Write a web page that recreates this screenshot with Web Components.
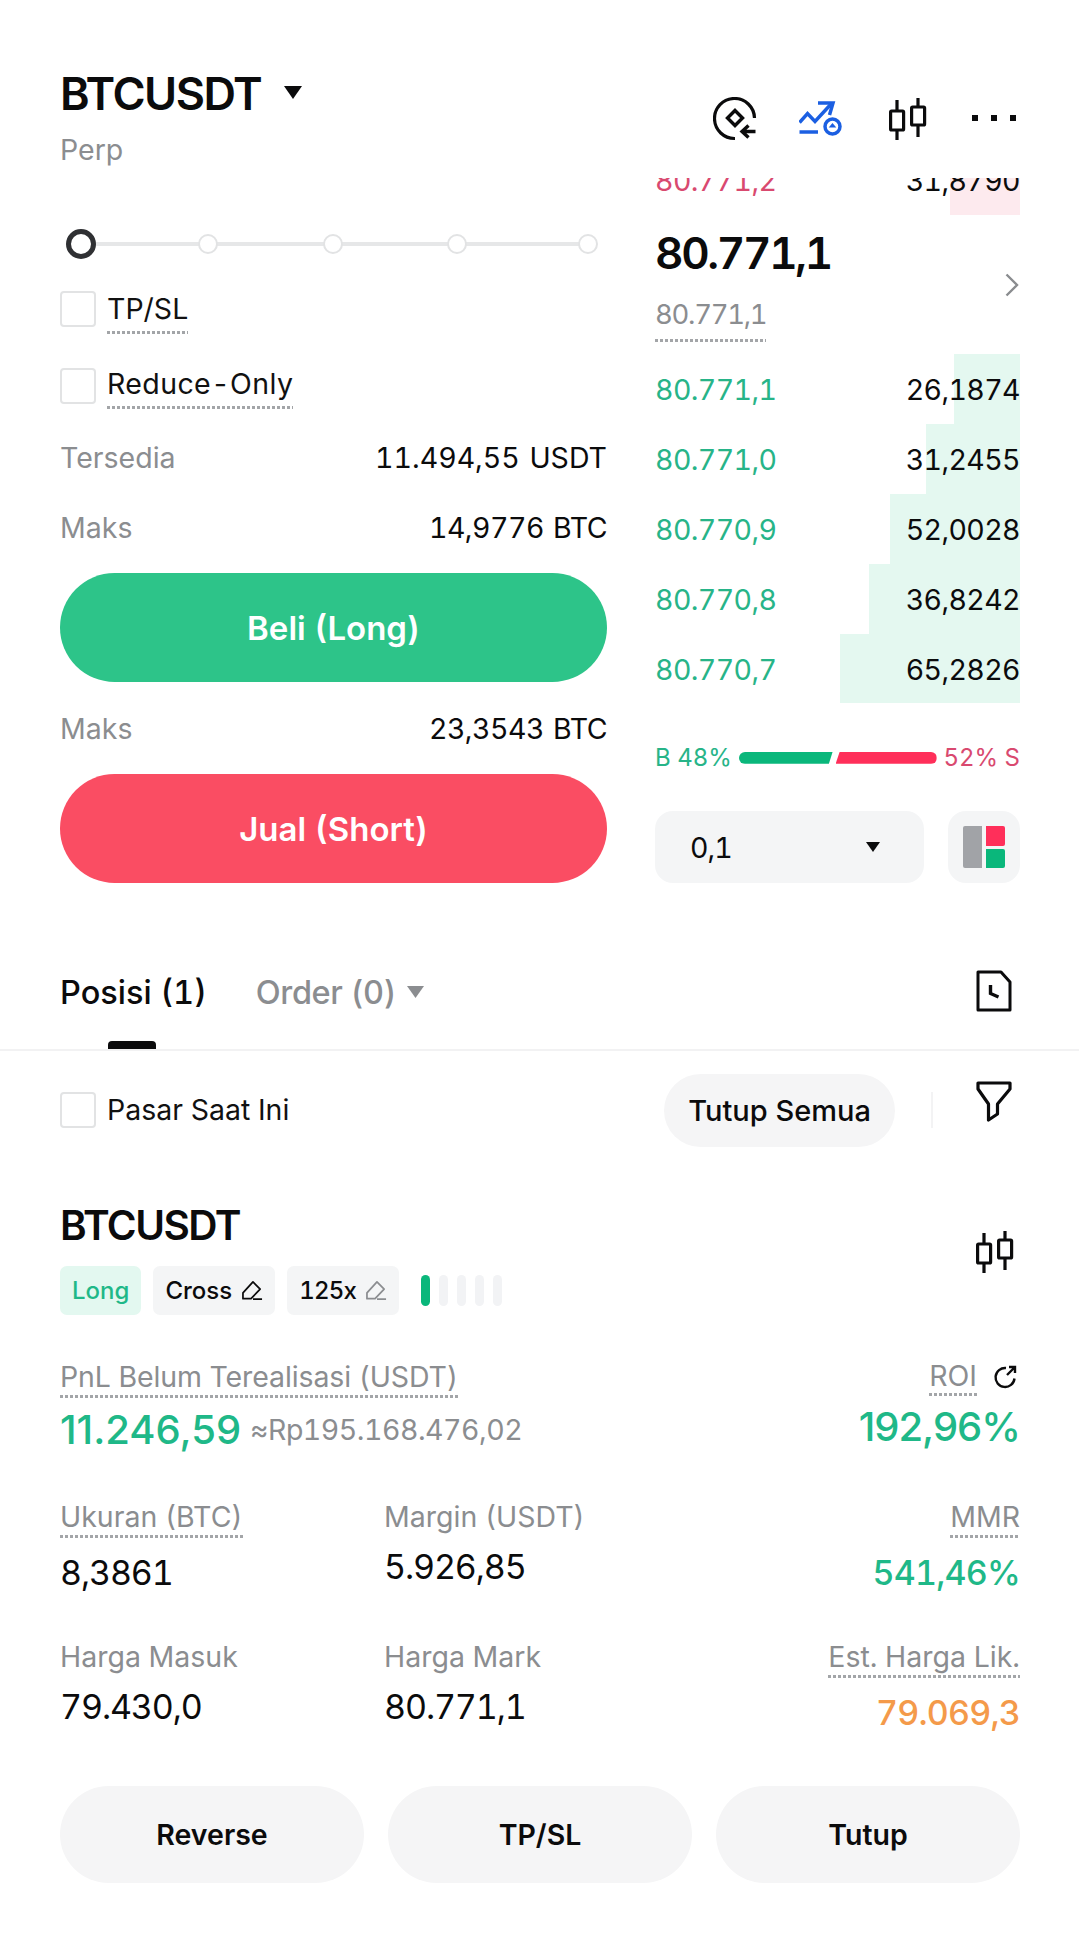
<!DOCTYPE html>
<html lang="id"><head><meta charset="utf-8"><title>BTCUSDT</title>
<style>
html,body{margin:0;background:#fff}
body{font-family:Inter,"Noto Sans",sans-serif;font-variant-numeric:tabular-nums;color:#0b0b0c;width:1079px;height:1934px;overflow:hidden}
</style></head><body>
<trade-screen></trade-screen>
<script>
const DOT='background-image:repeating-linear-gradient(90deg,#a3a5a8 0 3px,transparent 3px 5px);background-size:100% 3px;background-repeat:no-repeat;background-position:0 100%;padding-bottom:3px;';
function def(name,css,render){customElements.define(name,class extends HTMLElement{connectedCallback(){if(this.shadowRoot)return;const s=this.attachShadow({mode:'open'});s.innerHTML='<style>'+css+'</style>'+render(this)}})}
const ICONS={
 copy:'<svg width="44" height="44" viewBox="0 0 44 44" fill="none" stroke="#0b0b0c" stroke-width="3.2"><path d="M41.5 21A20 20 0 1 0 22 41.5"/><path d="M22 13.500l7.500 7.500-7.500 7.500-7.500-7.500z" stroke-width="3.400"/><path d="M42.500 34.500H29M35.500 28.500 29 34.500l6.500 6" stroke-width="3.400"/></svg>',
 alert:'<svg width="44" height="44" viewBox="0 0 44 44" fill="none" stroke="#1b5fe2" stroke-width="3.500"><path d="M.5 25.500 8.500 16.500l7.500 8L33 6"/><path d="M19 6h15l-3.500 12"/><path d="M.5 35h18.500"/><circle cx="33.500" cy="29.500" r="7.500"/><path d="M33.500 26l3.800 4.500h-7.600z" fill="#1b5fe2" stroke="none"/></svg>',
 candle:'<svg width="38" height="42" viewBox="0 0 38 42" fill="none" stroke="#0b0b0c" stroke-width="3.2"><rect x="1.6" y="13" width="13" height="19" rx="1"/><path d="M8 2v11M8 32v10"/><rect x="22.6" y="9" width="13" height="18" rx="1"/><path d="M29 0v9M29 27v12"/></svg>',
 more:'<svg width="44" height="8" viewBox="0 0 44 8" fill="#0b0b0c"><rect x="0" y="1" width="6" height="6"/><rect x="19" y="1" width="6" height="6"/><rect x="38" y="1" width="6" height="6"/></svg>',
 doc:'<svg width="36" height="42" viewBox="0 0 36 42" fill="none" stroke="#0b0b0c" stroke-width="3"><path d="M2 2H25L34 12V40H2Z" stroke-linejoin="round"/><path d="M14.500 15v8.500l8 3.500" stroke-width="3.400"/></svg>',
 funnel:'<svg width="36" height="42" viewBox="0 0 36 42" fill="none" stroke="#0b0b0c" stroke-width="3.2" stroke-linejoin="round"><path d="M2 2H34V8L21.500 23V33L12.500 39V23L2 8Z"/></svg>',
 chevron:'<svg width="14" height="24" viewBox="0 0 14 24" fill="none" stroke="#8a8c8f" stroke-width="2.400"><path d="M1.500 1.500 12 12 1.500 22.500"/></svg>',
 pencil:c=>'<svg width="21" height="22" viewBox="0 0 22 22" fill="none" stroke="'+c+'" stroke-width="1.800" stroke-linejoin="round"><path d="M1 19V13L11.500 1.500 19 9 9.500 19Z"/><path d="M11.500 19.500H21"/></svg>'
};
def('x-icon',':host{display:inline-flex;align-items:center;justify-content:center;line-height:0}',h=>ICONS[h.getAttribute('name')]);

def('x-check',`:host{display:flex;gap:11px;align-items:flex-start;height:44px;font-size:28.500px;color:#111}
.b{width:32px;height:32px;border:2px solid #e2e3e4;border-radius:4px;flex:none;background:#fff}
.t{line-height:36px;white-space:nowrap;margin-top:var(--ty,0)}
.d{${DOT}padding-bottom:7px}`,h=>`<div class="b"></div><div class="t ${h.hasAttribute('dotted')?'d':''}"><slot></slot></div>`);

def('x-slider',`:host{display:flex;align-items:center;height:28px;margin-left:6px;position:relative}
.l{position:absolute;left:10px;width:512px;top:12px;height:4px;background:#e6e7e8}
i{position:relative;box-sizing:border-box;width:20px;height:20px;border:2.500px solid #e2e3e4;border-radius:50%;background:#fff}
i.a{width:30px;height:30px;border:5.500px solid #2f3033}
`,()=>`<div class="l"></div><i class="a"></i><i style="margin-left:102px"></i><i style="margin-left:105px"></i><i style="margin-left:104px"></i><i style="margin-left:111px"></i>`);

def('x-kv',`:host{display:flex;justify-content:space-between;font-size:28.500px;line-height:40px}
.k{color:#8b8d90;letter-spacing:0}.v{color:#0b0b0c;word-spacing:2px}`,h=>`<span class="k">${h.getAttribute('k')}</span><span class="v">${h.getAttribute('v')}</span>`);

def('x-action',`:host{display:flex;align-items:center;justify-content:center;height:109px;border-radius:55px;color:#fff;font-size:33px;font-weight:600;background:var(--bg)}`,()=>'<slot></slot>');

def('book-row',`:host{display:flex;justify-content:space-between;align-items:center;height:70px;font-size:28.500px;letter-spacing:-.6px;position:relative;color:#0b0b0c}
.bg{position:absolute;top:0;bottom:0;right:0;background:var(--d)}
span{position:relative}.p{color:var(--c)}`,h=>`<div class="bg" style="width:${h.getAttribute('w')}px"></div><span class="p">${h.getAttribute('p')}</span><span>${h.getAttribute('q')}</span>`);

def('order-book',`:host{display:block;overflow:hidden}
.top{margin-top:-33px;--c:#d9496f;--d:#fdeaee}
.mid{display:flex;justify-content:space-between;align-items:center;margin-top:13px;margin-bottom:12px;padding-right:1px}
.big{font-size:44px;font-weight:600;line-height:50px;letter-spacing:-2.300px}
.sm{display:inline-block;font-size:27.500px;line-height:36px;color:#8b8d90;margin-top:18px;${DOT}padding-bottom:10px;letter-spacing:-1.300px}
.bids{--c:#27b488;--d:#e4f8f0}
.x{display:flex;flex-direction:column;align-items:flex-start}`,()=>`
<book-row class="top" p="80.771,2" q="31,8790" w="70"></book-row>
<div class="mid"><div class="x"><div class="big">80.771,1</div><div class="sm">80.771,1</div></div><x-icon name="chevron"></x-icon></div>
<div class="bids">
<book-row p="80.771,1" q="26,1874" w="66"></book-row>
<book-row p="80.771,0" q="31,2455" w="94"></book-row>
<book-row p="80.770,9" q="52,0028" w="130"></book-row>
<book-row p="80.770,8" q="36,8242" w="151"></book-row>
<book-row p="80.770,7" q="65,2826" w="180"></book-row>
</div>`);

def('ratio-bar',`:host{display:flex;align-items:center;justify-content:space-between;height:30px;font-size:24px;margin-top:40px}
.g{color:#27b488}.r{color:#d9496f}
.bar{display:flex;gap:3px}
.bar i{display:block;height:12px}
.a{width:94px;background:#0ab77b;border-radius:6px 0 0 6px;clip-path:polygon(0 0,100% 0,96% 100%,0 100%)}
.b{width:101px;background:#ff2f5a;border-radius:0 6px 6px 0;clip-path:polygon(4% 0,100% 0,100% 100%,0 100%)}`,()=>`<span class="g">B 48%</span><div class="bar"><i class="a"></i><i class="b"></i></div><span class="r">52% S</span>`);

def('depth-select',`:host{display:flex;justify-content:space-between;margin-top:39px;height:73px}
.s{width:269px;background:#f4f5f6;border-radius:18px;display:flex;align-items:center;justify-content:space-between;padding:0 44px 0 35px;box-sizing:border-box;font-size:28.500px;letter-spacing:-1px}
.l{width:72px;background:#f4f5f6;border-radius:18px;display:flex;align-items:center;justify-content:center}
svg{display:block}`,()=>`<div class="s"><span>0,1</span><svg width="14" height="10" viewBox="0 0 14 10"><path d="M0 0h14L7 10z" fill="#0b0b0c"/></svg></div>
<div class="l"><svg width="42" height="42" viewBox="0 0 42 42"><path d="M2 0h17v42H2a2 2 0 0 1-2-2V2a2 2 0 0 1 2-2z" fill="#a1a3a7"/><path d="M23 0h17a2 2 0 0 1 2 2v16a2 2 0 0 1-2 2H23z" fill="#ff2f5a"/><path d="M23 23h17a2 2 0 0 1 2 2v15a2 2 0 0 1-2 2H23z" fill="#0ab77b"/></svg></div>`);

def('top-bar',`:host{display:flex;justify-content:space-between;height:178px;padding:0 60px;box-sizing:border-box}
.t{font-size:45px;font-weight:600;line-height:52px;margin-top:68px;display:flex;align-items:center;letter-spacing:-1.500px}
.t svg{margin-left:23px;margin-top:-3px}
.p{font-size:28.500px;line-height:36px;color:#8b8d90;margin-top:12px}
.i{display:flex;align-items:center;height:44px;margin-top:97px;margin-right:3px}
.i x-icon:nth-child(2){margin-left:42px}.i x-icon:nth-child(3){margin-left:46px}.i x-icon:nth-child(4){margin-left:45px}
.i x-icon:nth-child(4){margin-top:-2px}
`,()=>`<div><div class="t">BTCUSDT<svg width="18" height="13" viewBox="0 0 18 13"><path d="M0 0h18L9 13z" fill="#0b0b0c"/></svg></div><div class="p">Perp</div></div>
<div class="i"><x-icon name="copy"></x-icon><x-icon name="alert"></x-icon><x-icon name="candle"></x-icon><x-icon name="more"></x-icon></div>`);

def('order-form',`:host{display:block}
x-slider{margin-top:52px}
.c1{margin-top:33px}.c2{margin-top:33px;letter-spacing:.4px;--ty:-2px}
.k1{margin-top:26px}.k2{margin-top:30px;letter-spacing:-.5px}
.b1{margin-top:25px}.k3{margin-top:27px;letter-spacing:-.5px}.b2{margin-top:25px}`,()=>`
<x-slider></x-slider>
<x-check class="c1" dotted>TP/SL</x-check>
<x-check class="c2" dotted>Reduce-Only</x-check>
<x-kv class="k1" k="Tersedia" v="11.494,55 USDT"></x-kv>
<x-kv class="k2" k="Maks" v="14,9776 BTC"></x-kv>
<x-action class="b1" style="--bg:#2dc489">Beli (Long)</x-action>
<x-kv class="k3" k="Maks" v="23,3543 BTC"></x-kv>
<x-action class="b2" style="--bg:#fa4d63">Jual (Short)</x-action>`);

def('tab-bar',`:host{display:flex;justify-content:space-between;height:168px;border-bottom:2px solid #f2f2f3;padding:0 60px;box-sizing:border-box;position:relative}
.tabs{display:flex;gap:49px;font-size:32.500px;font-weight:500;line-height:44px;margin-top:88px;height:44px}
.o{color:#8b8d90;display:flex;align-items:center;gap:11px;letter-spacing:-.4px}
.o svg{margin-top:-3px}
.u{position:absolute;left:108px;bottom:0;width:48px;height:8px;background:#0b0b0c;border-radius:4px 4px 0 0}
x-icon{margin-top:87px;height:42px;margin-right:7px}`,()=>`<div class="tabs"><span class="p">Posisi (1)<i class="u"></i></span><span class="o">Order (0)<svg width="17" height="12" viewBox="0 0 17 12"><path d="M0 0h17L8.500 12z" fill="#8b8d90"/></svg></span></div><x-icon name="doc"></x-icon>`);
</script>
<script>
def('filter-row',`:host{display:flex;align-items:flex-start;height:73px;margin-top:23px;padding:0 60px;font-size:28.500px}
x-check{margin-top:18px;flex:1}
.pill{box-sizing:border-box;width:231px;height:73px;border-radius:37px;background:#f5f5f6;display:flex;align-items:center;justify-content:center;font-weight:500;font-size:29px}
.sep{width:2px;height:36px;background:#f3f3f4;margin:18px 43px 0 36px}
x-icon{margin-top:7px;margin-right:7px}`,()=>`<x-check>Pasar Saat Ini</x-check><div class="pill">Tutup Semua</div><div class="sep"></div><x-icon name="funnel"></x-icon>`);

def('x-chip',`:host{display:flex;align-items:center;gap:10px;height:49px;padding:0 12px;border-radius:7px;background:var(--b,#f4f5f6);color:var(--f,#0b0b0c);font-size:24px;font-weight:500;box-sizing:border-box}`,()=>'<slot></slot>');

def('lev-bars',`:host{display:flex;gap:9px;margin-left:10px;align-items:center}i{display:block;width:9px;height:31px;border-radius:5px;background:#f2f3f5}i.a{background:#0ab77b}`,()=>'<i class="a"></i><i></i><i></i><i></i><i></i>');

def('x-stat',`:host{display:block;font-size:28.500px}
.l{display:inline-block;line-height:36px;color:#8b8d90}
.d{${DOT}}
.v{margin-top:12px;line-height:40px;font-size:34px;color:#0b0b0c;letter-spacing:-1.100px}
.d+.v{margin-top:15px}
:host([right]){text-align:right}
:host([color=g]) .v{color:#1fb888;font-weight:500;letter-spacing:-.8px}:host([color=o]) .v{color:#f49a4a;font-weight:500;letter-spacing:-.8px}`,h=>`<div class="l ${h.hasAttribute('dotted')?'d':''}">${h.getAttribute('k')}</div><div class="v">${h.getAttribute('v')}</div>`);

def('position-card',`:host{display:block;margin-top:54px;padding:0 59px 0 60px}
.h{display:flex;justify-content:space-between;height:114px}
.n{font-size:40.500px;font-weight:600;line-height:50px;letter-spacing:-1.500px}
.chips{display:flex;gap:12px;margin-top:15px;align-items:center}
.h>x-icon{margin-top:30px;margin-right:6px;align-self:flex-start}
.pnl{display:flex;justify-content:space-between;margin-top:44px}
.l{display:inline-block;line-height:36px;font-size:28.500px;letter-spacing:-.1px;color:#8b8d90;${DOT}}
.r{display:flex;flex-direction:column;align-items:flex-end}
.rl{display:flex;gap:16px;align-items:center;height:36px;font-size:28.500px;color:#8b8d90;margin-right:3px}
.rl span{${DOT}}
.rl svg{display:block}
.big{font-size:40px;line-height:48px;margin-top:8px;color:#1fb888;font-weight:500;display:flex;align-items:center;gap:9px;font-variant-numeric:normal}
.r .big{letter-spacing:-1px}
.big small{font-size:28.500px;font-weight:400;color:#8b8d90;letter-spacing:-.5px;font-variant-numeric:tabular-nums}
.g{display:grid;grid-template-columns:324px 324px 1fr;row-gap:46px;margin-top:45px}
.btns{display:grid;grid-template-columns:repeat(3,304px);gap:24px;margin-top:53px}
.btn{height:97px;border-radius:49px;background:#f5f5f6;display:flex;align-items:center;justify-content:center;font-size:28.500px;font-weight:600}`,()=>`
<div class="h"><div><div class="n">BTCUSDT</div><div class="chips">
<x-chip style="--b:#e3f8f0;--f:#1fb888">Long</x-chip>
<x-chip>Cross<x-icon name="p1"></x-icon></x-chip>
<x-chip style="letter-spacing:-.8px">125x<x-icon name="p2"></x-icon></x-chip>
<lev-bars></lev-bars></div></div><x-icon name="candle"></x-icon></div>
<div class="pnl"><div><div class="l">PnL Belum Terealisasi (USDT)</div><div class="big">11.246,59<small>≈Rp195.168.476,02</small></div></div>
<div class="r"><div class="rl"><span>ROI</span><svg width="24" height="24" viewBox="0 0 24 24" fill="none" stroke="#0b0b0c" stroke-width="2.400"><path d="M21.500 13.500A9.500 9.500 0 1 1 13 3"/><path d="M14 10 22 2M16 2h6v6"/></svg></div><div class="big">192,96%</div></div></div>
<div class="g">
<x-stat dotted k="Ukuran (BTC)" v="8,3861"></x-stat><x-stat k="Margin (USDT)" v="5.926,85"></x-stat><x-stat right dotted color="g" k="MMR" v="541,46%"></x-stat>
<x-stat k="Harga Masuk" v="79.430,0"></x-stat><x-stat k="Harga Mark" v="80.771,1"></x-stat><x-stat right dotted color="o" k="Est. Harga Lik." v="79.069,3"></x-stat>
</div>
<div class="btns"><div class="btn">Reverse</div><div class="btn">TP/SL</div><div class="btn">Tutup</div></div>`);

ICONS.p1=ICONS.pencil('#0b0b0c');ICONS.p2=ICONS.pencil('#8b8d90');

def('trade-screen',`:host{display:block;width:1079px}
.m{display:grid;grid-template-columns:547px 365px;column-gap:48px;padding:0 60px;height:705px}
.wrap{height:705px;overflow:hidden;display:flex;flex-direction:column}
`,()=>`<top-bar></top-bar>
<div class="m"><order-form></order-form><div class="wrap"><order-book style="height:525px;flex:none"></order-book><ratio-bar></ratio-bar><depth-select></depth-select></div></div>
<tab-bar></tab-bar><filter-row></filter-row><position-card></position-card>`);
</script>
</body></html>
